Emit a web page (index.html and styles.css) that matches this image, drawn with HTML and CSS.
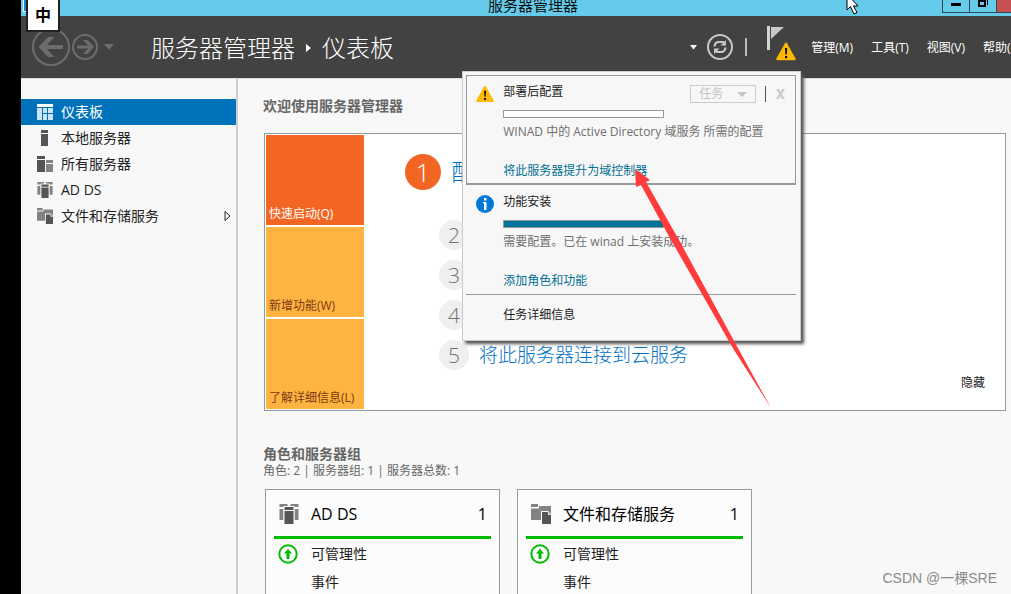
FILE: index.html
```html
<!DOCTYPE html>
<html lang="zh-CN">
<head>
    <meta charset="UTF-8">
    <title>服务器管理器</title>
    <link rel="stylesheet" href="styles.css">
</head>
<body>
    <svg class="sprite" aria-hidden="true">
        <symbol id="icon-warning" viewBox="0 0 20 18">
            <path d="M9 .8q1-1.400 2 0l8.700 15.400q.5 1.300-.8 1.600H1.100q-1.300-.3-.8-1.600z" fill="#ffb900"/>
            <path d="M9 5.500h2.200l-.4 6.500H9.400zM9 13.500h2.200v2.200H9z" fill="#111"/>
        </symbol>
        <symbol id="icon-adds" viewBox="0 0 19 20">
            <path d="M0 0h8v3H0zM11 0h8v3h-8zM0 5h4v11H0zM15 5h4v11h-4z" fill="#828282"/>
            <path d="M4 2h11v18H4z" fill="#fbfbfb"/>
            <path d="M5 3h9v3H5zM5 7h9v13H5z" fill="#555"/>
        </symbol>
        <symbol id="icon-files" viewBox="0 0 20 20">
            <path d="M0 0h7v3H0zM8 2h12v5H8zM0 4.500h9V16H0zM8 5h12v4H8zM8 8h3v8H8z" fill="#828282"/>
            <path d="M10 7h7l3 3v10H10z" fill="#fbfbfb"/>
            <path d="M11 8h6v3h3v9h-9z" fill="#555"/>
            <path d="M17.800 8l2.200 2.200h-2.200z" fill="#828282"/>
        </symbol>
        <symbol id="icon-up" viewBox="0 0 20 20">
            <circle cx="10" cy="10" r="8.700" fill="none" stroke="#0b0" stroke-width="2"/>
            <path d="M10 4.800l4 4.700h-2.500V15h-3V9.500H6z" fill="#0b0"/>
        </symbol>
    </svg>

    <div class="window">
        <div class="titlebar">
            <span class="app-icon"></span>
            <span class="titlebar-text">服务器管理器</span>
            <div class="window-buttons">
                <button class="minimize" aria-label="最小化"><svg width="10" height="3"><path d="M0 0h10v3H0z"/></svg></button>
                <button class="restore" aria-label="还原"><svg width="10" height="10" fill="none" stroke="#000" stroke-width="2"><path d="M1 1h6v5H1z"/><path d="M9.500 0v5" stroke-width="1"/></svg></button>
                <button class="close" aria-label="关闭"></button>
            </div>
        </div>

        <header class="header">
            <div class="history">
                <button aria-label="后退"><svg width="38" height="38" fill="none" stroke="#6d6d6d"><circle cx="19" cy="19" r="18" stroke-width="2"/><path d="M31 19H10" stroke-width="4"/><path d="M16 9h6.500L13 19l9.500 10H16L6.500 19z" fill="#6d6d6d" stroke="none"/></svg></button>
                <button aria-label="前进"><svg width="26" height="26" fill="none" stroke="#6d6d6d"><circle cx="13" cy="13" r="12" stroke-width="2"/><path d="M5 13h14" stroke-width="3"/><path d="M11 6h4.500l6.500 7-6.500 7H11l6.500-7z" fill="#6d6d6d" stroke="none"/></svg></button>
                <button aria-label="历史记录"><svg width="10" height="6"><path d="M0 0h10L5 6z" fill="#6d6d6d"/></svg></button>
            </div>
            <h1 class="breadcrumb">服务器管理器<svg width="5" height="8"><path d="M0 0l5 4-5 4z" fill="#fff"/></svg>仪表板</h1>

            <div class="tools">
                <button aria-label="更多"><svg width="7" height="5"><path d="M0 0h7L3.500 4.500z" fill="#fff"/></svg></button>
                <button class="refresh" aria-label="刷新">
                    <svg width="26" height="26" fill="none" stroke="#c8c8c8">
                        <circle cx="13" cy="13" r="12" stroke-width="2"/>
                        <path d="M7.500 12.500Q8 8 12 8h5M18.500 13.500Q18 18 14 18H9" stroke-width="2.200"/>
                        <path d="M13.500 11.500L19 6v5.500zM12.500 14.500L7 20v-5.500z" fill="#c8c8c8" stroke="none"/>
                    </svg>
                </button>
                <span class="divider"></span>
                <div class="notify">
                    <button aria-label="通知">
                        <svg width="30" height="36">
                            <path d="M1 0h3v24H1z" fill="#d2d2d2"/>
                            <path d="M5 1h13L5 13z" fill="#c8c8c8"/>
                            <use href="#icon-warning" x="10" y="16" width="20" height="19"/>
                        </svg>
                    </button>
                    <section class="flyout">
                        <article class="task task-selected">
                            <svg class="task-icon" width="18" height="18"><use href="#icon-warning"/></svg>
                            <div class="task-body">
                                <h2>部署后配置</h2>
                                <div class="progress"></div>
                                <p>WINAD 中的 Active Directory 域服务 所需的配置</p>
                                <a href="#">将此服务器提升为域控制器</a>
                            </div>
                            <div class="task-actions">
                                <button class="task-menu" disabled>任务 <svg width="10" height="5"><path d="M0 0h10L5 5z" fill="#c4c4c4"/></svg></button>
                                <button class="dismiss" disabled aria-label="删除任务"><svg width="9" height="10"><path d="M0 0h3l1.500 3L6 0h3L6 5l3 5H6L4.500 7 3 10H0l3-5z" fill="#ccc"/></svg></button>
                            </div>
                        </article>
                        <article class="task">
                            <svg class="task-icon" width="18" height="18"><circle cx="9" cy="9" r="9" fill="#0078d7"/><path d="M8 3h2.500v2.500H8zM7 7h3.500v8H8V8.500H7z" fill="#fff"/></svg>
                            <div class="task-body">
                                <h2>功能安装</h2>
                                <div class="progress done"></div>
                                <p>需要配置。已在 winad 上安装成功。</p>
                                <a href="#">添加角色和功能</a>
                            </div>
                        </article>
                        <button class="task-details">任务详细信息</button>
                    </section>
                </div>
                <nav class="menu">
                    <button>管理(M)</button>
                    <button>工具(T)</button>
                    <button>视图(V)</button>
                    <button>帮助(H)</button>
                </nav>
            </div>
        </header>

        <div class="body">
            <nav class="sidebar">
                <a href="#" class="active">
                    <svg width="16" height="16"><path d="M0 0h16v3H0z" fill="#fff"/><path d="M0 4h5v12H0zM6 4h4v5H6zM11 4h5v5h-5zM6 10h4v6H6zM11 10h5v6h-5z" fill="#cde4f4"/></svg>
                    仪表板
                </a>
                <a href="#">
                    <svg width="16" height="16"><path d="M4 0h7v3H4zM4 4h7v12H4z" fill="#555"/></svg>
                    本地服务器
                </a>
                <a href="#">
                    <svg width="16" height="16"><path d="M0 0h8v3H0zM0 4h8v12H0z" fill="#555"/><path d="M9 4h7v3H9zM9 8h7v8H9z" fill="#828282"/></svg>
                    所有服务器
                </a>
                <a href="#">
                    <svg width="16" height="16"><use href="#icon-adds"/></svg>
                    AD DS
                </a>
                <a href="#">
                    <svg width="16" height="16"><use href="#icon-files"/></svg>
                    文件和存储服务
                    <svg class="expand" width="7" height="10"><path d="M1 .5l5 4.500-5 4.500z" fill="none" stroke="#222"/></svg>
                </a>
            </nav>

            <main class="content">
                <h2 class="section-title">欢迎使用服务器管理器</h2>
                <section class="welcome">
                    <div class="tiles">
                        <button class="tile tile-active">快速启动(Q)</button>
                        <button class="tile">新增功能(W)</button>
                        <button class="tile">了解详细信息(L)</button>
                    </div>
                    <ol class="steps">
                        <li class="first"><span>1</span><a href="#">配置此本地服务器</a></li>
                        <li><span>2</span><a href="#">添加角色和功能</a></li>
                        <li><span>3</span><a href="#">添加要管理的其他服务器</a></li>
                        <li><span>4</span><a href="#">创建服务器组</a></li>
                        <li><span>5</span><a href="#">将此服务器连接到云服务</a></li>
                    </ol>
                    <button class="hide">隐藏</button>
                </section>

                <h2 class="section-title">角色和服务器组</h2>
                <p class="summary">角色: 2 | 服务器组: 1 | 服务器总数: 1</p>
                <div class="cards">
                    <section class="card">
                        <h3><svg width="20" height="20"><use href="#icon-adds"/></svg>AD DS<span>1</span></h3>
                        <ul>
                            <li><svg width="20" height="20"><use href="#icon-up"/></svg>可管理性</li>
                            <li>事件</li>
                        </ul>
                    </section>
                    <section class="card">
                        <h3><svg width="20" height="20"><use href="#icon-files"/></svg>文件和存储服务<span>1</span></h3>
                        <ul>
                            <li><svg width="20" height="20"><use href="#icon-up"/></svg>可管理性</li>
                            <li>事件</li>
                        </ul>
                    </section>
                </div>
            </main>
        </div>
    </div>

    <!-- overlays -->
    <div class="ime">中</div>
    <svg class="pointer" width="14" height="16" viewBox="0 0 14 16"><path d="M1-6v16l3.500-3.500L8 14l3-1.500L7.500 6H12z" fill="#fff" stroke="#000"/></svg>
    <svg class="arrow" width="138" height="242"><path d="M1 0l15 11-4 2 33 58 60 110 32 58-37-58L37 71 7 16l-5 2z" fill="#ff3b3b"/></svg>
    <div class="watermark">CSDN @一棵SRE</div>
</body>
</html>
```
FILE: styles.css
```css
* {
    box-sizing: border-box;
}
body {
    margin: 0;
    height: 100vh;
    padding-left: 21px;
    overflow: hidden;
    position: relative;
    background: #000;
    color: #222;
    font-family: "Open Sans", "Noto Sans CJK SC", sans-serif;
    font-size: 12px;
    line-height: 20px;
}
h1, h2, h3, p, ul, ol {
    margin: 0;
    padding: 0;
    font-weight: normal;
    list-style: none;
}
button {
    padding: 0;
    border: 0;
    background: none;
    color: inherit;
    font: inherit;
    white-space: nowrap;
}
a {
    color: inherit;
    text-decoration: none;
}
svg {
    display: block;
    flex: none;
}
.sprite {
    position: absolute;
    width: 0;
    height: 0;
}
.window {
    height: 100%;
    display: flex;
    flex-direction: column;
    overflow: hidden;
    background: #f8f8f8;
}

/* title bar */
.titlebar {
    flex: none;
    height: 16px;
    display: grid;
    grid-template-columns: 1fr auto 1fr;
    align-items: start;
    background: #66caea;
    color: #111;
}
.app-icon {
    width: 16px;
    height: 12px;
    margin-left: 2px;
    border: 1px solid #fff;
    border-top: 0;
    background: #1e86d8;
}
.titlebar-text {
    font-size: 15px;
    line-height: 10px;
    margin-left: 34px;
}
.window-buttons {
    display: flex;
    justify-content: flex-end;
}
.window-buttons button {
    width: 28px;
    height: 13px;
    display: flex;
    justify-content: center;
    border: 1px solid #2f4a55;
    border-top: 0;
}
.window-buttons .minimize {
    padding-top: 3px;
}
.window-buttons .restore {
    width: 27px;
    border-left: 0;
}
.window-buttons .close {
    width: 14px;
    border-left: 0;
    border-right: 0;
    background: #c75050;
}

/* header */
.header {
    flex: none;
    height: 62px;
    display: flex;
    align-items: center;
    background: #424242;
    color: #fff;
}
.history {
    display: flex;
    align-items: center;
    gap: 2px;
    padding-left: 11px;
}
.history button:last-child {
    margin-left: 4px;
}
.breadcrumb {
    display: flex;
    align-items: center;
    gap: 11px;
    margin-left: 37px;
    padding-top: 2px;
    font-size: 24px;
    font-weight: 300;
    white-space: nowrap;
}
.tools {
    display: flex;
    align-items: center;
    margin-left: auto;
    margin-right: -12px;
}
.refresh {
    margin-left: 10px;
}
.divider {
    width: 2px;
    height: 18px;
    margin: 0 19px 0 12px;
    background: #bbb;
}
.notify {
    position: relative;
}
.menu {
    display: flex;
    gap: 18px;
    margin-left: 15px;
    padding-top: 2px;
}

/* notification flyout */
.flyout {
    position: absolute;
    top: 45px;
    right: -5px;
    z-index: 2;
    width: 339px;
    padding: 3px 4px 15px 3px;
    border: 1px solid #ccc;
    background: #f7f7f7;
    box-shadow: 3px 3px 3px #555;
    color: #222;
}
.task {
    display: flex;
    align-items: flex-start;
    position: relative;
    padding: 7px 0 3px 10px;
    border-bottom: 1px solid #999;
}
.task-selected {
    padding: 6px 0 2px 9px;
    border: 1px solid #999;
    border-bottom-width: 2px;
}
.task-icon {
    margin: 3px 9px 0 0;
}
.task-body h2 {
    font-size: 12px;
}
.task-body p {
    margin-top: 4px;
    color: #707070;
    white-space: nowrap;
}
.task-body a {
    display: block;
    margin-top: 19px;
    color: #007094;
}
.progress {
    width: 161px;
    height: 8px;
    margin-top: 8px;
    border: 1px solid #999;
    background: #fff;
}
.progress.done {
    background: #007399;
}
.task-actions {
    position: absolute;
    top: 9px;
    right: 10px;
    display: flex;
    align-items: center;
    color: #c4c4c4;
}
.task-menu {
    width: 66px;
    height: 18px;
    display: flex;
    align-items: center;
    justify-content: space-between;
    padding: 0 8px;
    border: 1px solid #ccc;
}
.dismiss {
    margin-left: 9px;
    padding: 3px 0 3px 10px;
    border-left: 1px solid #555;
}
.task-details {
    display: block;
    margin: 10px 0 0 37px;
}

/* body */
.body {
    flex: 1;
    min-height: 0;
    display: flex;
    border-top: 1px solid #ddd;
}
.sidebar {
    flex: none;
    width: 217px;
    padding-top: 20px;
    border-right: 2px solid #ccc;
    font-size: 14px;
}
.sidebar a {
    display: flex;
    align-items: center;
    gap: 8px;
    height: 26px;
    padding: 0 5px 0 16px;
}
.sidebar .active {
    background: #0072bc;
    color: #fff;
}
.expand {
    margin-left: auto;
}
.content {
    flex: 1;
    min-width: 0;
    padding: 17px 5px 0 26px;
}
.section-title {
    margin-left: -1px;
    font-size: 14px;
    font-weight: bold;
    color: #666;
}

/* welcome panel */
.welcome {
    display: flex;
    margin-top: 17px;
    padding: 1px;
    border: 1px solid #999;
    background: #fff;
}
.tiles {
    display: grid;
    gap: 2px;
}
.tile {
    width: 98px;
    height: 90px;
    display: flex;
    align-items: flex-end;
    padding: 0 3px 1px;
    background: #ffb441;
    color: #7d3a12;
}
.tile-active {
    background: #f26522;
    color: #fff;
}
.steps {
    padding: 19px 0 0 75px;
    font-size: 19px;
    font-weight: 300;
    color: #0072c6;
    white-space: nowrap;
}
.steps li {
    display: flex;
    align-items: center;
    gap: 10px;
    height: 40px;
}
.steps span {
    width: 30px;
    border-radius: 50%;
    background: #efefef;
    color: #707070;
    font-size: 21px;
    line-height: 30px;
    text-align: center;
}
.steps .first {
    height: 36px;
    margin: 0 0 25px -34px;
    font-size: 24px;
}
.steps .first span {
    width: 36px;
    background: #f26522;
    color: #fff;
    font-size: 26px;
    line-height: 36px;
}
.hide {
    align-self: flex-end;
    margin: 0 19px 16px auto;
}

/* role cards */
.welcome + .section-title {
    margin-top: 33px;
}
.summary {
    margin: -3px 0 0 -1px;
    color: #666;
}
.cards {
    display: flex;
    gap: 17px;
    margin: 8px 0 0 1px;
}
.card {
    width: 235px;
    height: 200px;
    padding: 0 8px;
    border: 1px solid #999;
    background: #fcfcfc;
    font-size: 14px;
}
.card h3 {
    display: flex;
    align-items: center;
    gap: 12px;
    height: 49px;
    padding: 2px 4px 0 5px;
    border-bottom: 3px solid #0b0;
    color: #000;
    font-size: 16px;
}
.card h3 span {
    margin-left: auto;
}
.card ul {
    padding-top: 1px;
}
.card li {
    display: flex;
    align-items: center;
    gap: 13px;
    height: 28px;
    padding-left: 37px;
}
.card li svg {
    margin-left: -33px;
}

/* things floating over the window */
.ime {
    position: absolute;
    top: -2px;
    left: 26px;
    width: 34px;
    height: 34px;
    border: 2px solid #222;
    background: #fff;
    color: #000;
    font-size: 16px;
    font-weight: bold;
    line-height: 30px;
    text-align: center;
}
.pointer {
    position: absolute;
    top: 0;
    left: 846px;
}
.arrow {
    position: absolute;
    top: 169px;
    left: 634px;
    z-index: 3;
}
.watermark {
    position: absolute;
    right: 14px;
    bottom: 6px;
    color: #8a8a8a;
    font-family: "Liberation Sans", "Noto Sans CJK SC", sans-serif;
    font-size: 14px;
}
```
